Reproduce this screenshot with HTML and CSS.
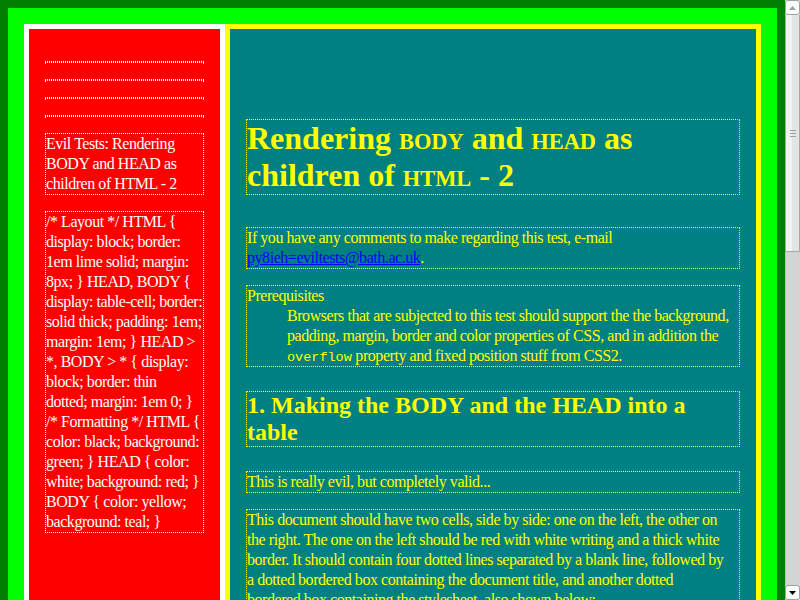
FILE: index.html
```html
<!DOCTYPE html>
<html>
<head>
<meta charset="utf-8">
<title>Evil Tests: Rendering BODY and HEAD as children of HTML - 2</title>
<link rel="stylesheet" href="styles.css">
</head>
<body>
<div class="viewport">
  <div class="doc">
    <div class="row">
      <div class="cell head">
        <div class="hline"></div>
        <div class="hline"></div>
        <div class="hline"></div>
        <div class="hline"></div>
        <div class="box">Evil Tests: Rendering BODY and HEAD as children of HTML - 2</div>
        <div class="box">/* Layout */ HTML { display: block; border: 1em lime solid; margin: 8px; } HEAD, BODY { display: table-cell; border: solid thick; padding: 1em; margin: 1em; } HEAD &gt; *, BODY &gt; * { display: block; border: thin<br>dotted; margin: 1em 0; } /* Formatting */ HTML { color: black; background: green; } HEAD { color: white; background: red; } BODY { color: yellow; background: teal; }</div>
      </div>
      <div class="cell main">
        <h1>Rendering <span class="sc">BODY</span> and <span class="sc">HEAD</span> as children of <span class="sc">HTML</span> - 2</h1>
        <p>If you have any comments to make regarding this test, e-mail <a href="#">py8ieh=eviltests@bath.ac.uk</a>.</p>
        <dl>
          <dt>Prerequisites</dt>
          <dd>Browsers that are subjected to this test should support the the background, padding, margin, border and color properties of CSS, and in addition the <code>overflow</code> property and fixed position stuff from CSS2.</dd>
        </dl>
        <h2>1. Making the BODY and the HEAD into a table</h2>
        <p>This is really evil, but completely valid...</p>
        <p>This document should have two cells, side by side: one on the left, the other on<br>the right. The one on the left should be red with white writing and a thick white border. It should contain four dotted lines separated by a blank line, followed by<br>a dotted bordered box containing the document title, and another dotted<br>bordered box containing the stylesheet, also shown below:</p>
      </div>
    </div>
  </div>
</div>
<div class="scrollbar">
  <div class="sb-btn sb-up">
    <svg width="7" height="4" viewBox="0 0 7 4"><path d="M0 4 L3.5 0 L7 4 Z" fill="#a0a0a0"/></svg>
  </div>
  <div class="sb-thumb">
    <svg width="6" height="7" viewBox="0 0 6 7"><path d="M0 0.5 H6 M0 3.5 H6 M0 6.5 H6" stroke="#a0a0a0" stroke-width="1"/></svg>
  </div>
  <div class="sb-track"></div>
  <div class="sb-btn sb-down">
    <svg width="7" height="4" viewBox="0 0 7 4"><path d="M0 0 L7 0 L3.5 4 Z" fill="#000"/></svg>
  </div>
</div>
</body>
</html>
```

FILE: styles.css
```css
html, body {
  margin: 0;
  padding: 0;
}

body {
  display: flex;
  width: 800px;
  height: 600px;
  overflow: hidden;
  background: #008000;
}

.viewport {
  flex: none;
  width: 785px;
  height: 600px;
  overflow: hidden;
  background: #008000;
}

.doc {
  margin: 8px;
  border: 16px solid #00ff00;
  background: #008000;
  color: #000;
  font-family: "Liberation Serif", "Times New Roman", serif;
  font-size: 16px;
  line-height: 20px;
  letter-spacing: -0.45px;
}

.row {
  display: table;
  width: 100%;
  table-layout: fixed;
}

.cell {
  display: table-cell;
  border: 5px solid;
  padding: 16px;
  vertical-align: baseline;
}

.head {
  width: 159px;
  color: #fff;
  background: #f00;
}

.main {
  color: #ff0;
  background: #008080;
}

.cell > * {
  display: block;
  border: 1px dotted;
  margin: 16px 0;
}

.hline {
  height: 0;
}

.main > h1 {
  font-size: 32px;
  font-weight: bold;
  line-height: normal;
  letter-spacing: 0;
  margin: 32px 0;
}

.sc {
  font-size: 0.7em;
}

.main > h2 {
  font-size: 24px;
  font-weight: bold;
  line-height: normal;
  letter-spacing: 0;
  margin: 24px 0;
}

dt {
  margin: 0;
}

dd {
  margin: 0 0 0 40px;
}

code {
  font-family: "Liberation Mono", "Courier New", monospace;
  font-size: 13.5px;
  line-height: 14px;
  letter-spacing: 0;
}

a {
  color: #0000ff;
  text-decoration: underline;
}

.scrollbar {
  flex: none;
  width: 15px;
  height: 600px;
  display: flex;
  flex-direction: column;
  background: #d4d4d4;
}

.sb-btn {
  flex: none;
  height: 15px;
  box-sizing: border-box;
  border: 1px solid #a0a0a0;
  border-radius: 3px;
  background: #fcfcfc;
  display: flex;
  align-items: center;
  justify-content: center;
}

.sb-thumb {
  flex: none;
  height: 237px;
  box-sizing: border-box;
  border: 1px solid #a8a8a8;
  border-top: none;
  background: linear-gradient(to right, #f2f2f2 0 6px, #e4e4e4 6px);
  display: flex;
  align-items: center;
  justify-content: center;
}

.sb-track {
  flex: 1;
  border-left: 1px solid #c0c0c0;
}
```
